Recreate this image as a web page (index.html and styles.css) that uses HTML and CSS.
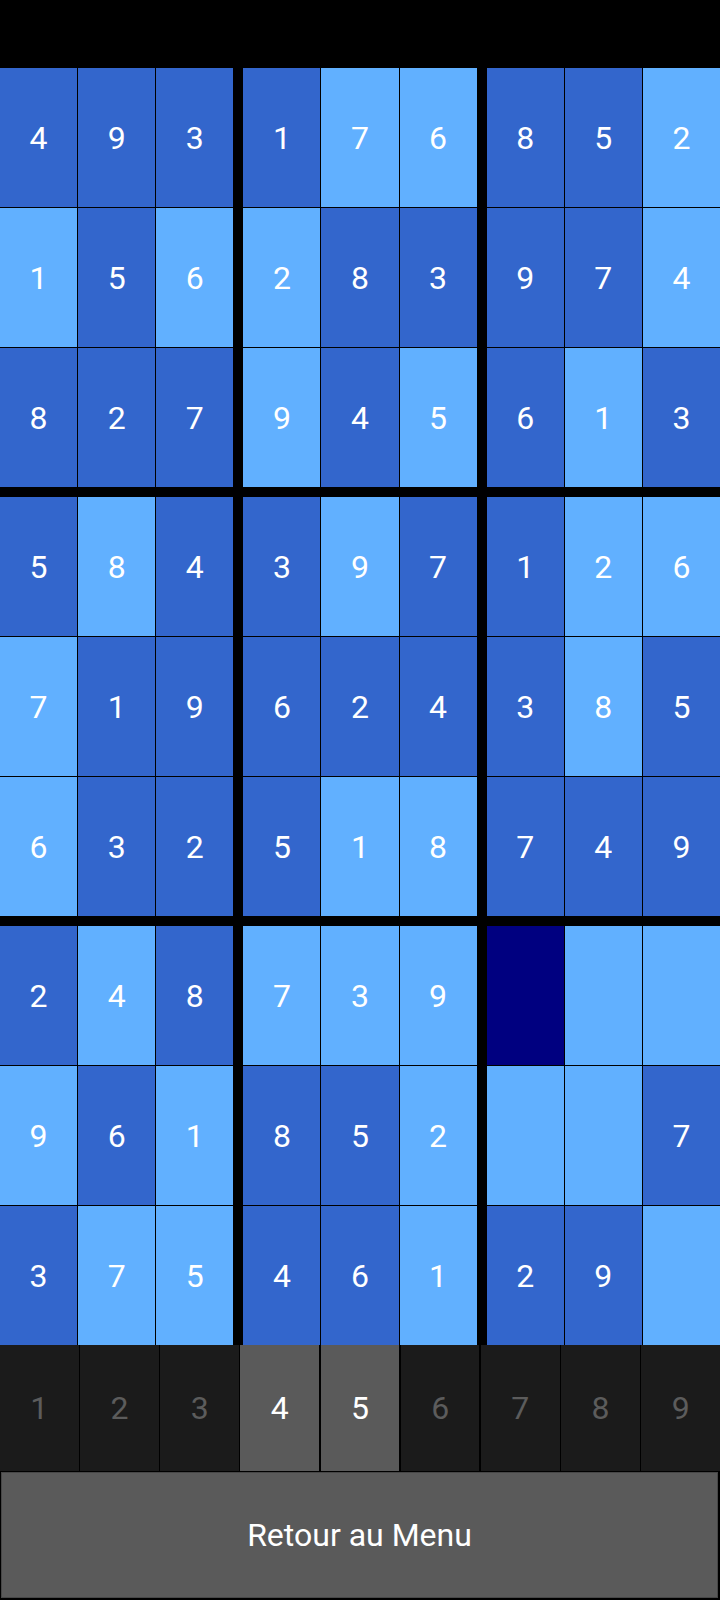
FILE: index.html
```html
<html><head>
<meta charset="UTF-8">
<link rel="stylesheet" href="styles.css">
</head>
<body>
  <div class="topbar"></div>

  <div class="board">
    <div class="block">
      <div class="cell dark">4</div><div class="cell dark">9</div><div class="cell dark">3</div>
      <div class="cell light">1</div><div class="cell dark">5</div><div class="cell light">6</div>
      <div class="cell dark">8</div><div class="cell dark">2</div><div class="cell dark">7</div>
    </div>
    <div class="block">
      <div class="cell dark">1</div><div class="cell light">7</div><div class="cell light">6</div>
      <div class="cell light">2</div><div class="cell dark">8</div><div class="cell dark">3</div>
      <div class="cell light">9</div><div class="cell dark">4</div><div class="cell light">5</div>
    </div>
    <div class="block">
      <div class="cell dark">8</div><div class="cell dark">5</div><div class="cell light">2</div>
      <div class="cell dark">9</div><div class="cell dark">7</div><div class="cell light">4</div>
      <div class="cell dark">6</div><div class="cell light">1</div><div class="cell dark">3</div>
    </div>

    <div class="block">
      <div class="cell dark">5</div><div class="cell light">8</div><div class="cell dark">4</div>
      <div class="cell light">7</div><div class="cell dark">1</div><div class="cell dark">9</div>
      <div class="cell light">6</div><div class="cell dark">3</div><div class="cell dark">2</div>
    </div>
    <div class="block">
      <div class="cell dark">3</div><div class="cell light">9</div><div class="cell dark">7</div>
      <div class="cell dark">6</div><div class="cell dark">2</div><div class="cell dark">4</div>
      <div class="cell dark">5</div><div class="cell light">1</div><div class="cell light">8</div>
    </div>
    <div class="block">
      <div class="cell dark">1</div><div class="cell light">2</div><div class="cell light">6</div>
      <div class="cell dark">3</div><div class="cell light">8</div><div class="cell dark">5</div>
      <div class="cell dark">7</div><div class="cell dark">4</div><div class="cell dark">9</div>
    </div>

    <div class="block">
      <div class="cell dark">2</div><div class="cell light">4</div><div class="cell dark">8</div>
      <div class="cell light">9</div><div class="cell dark">6</div><div class="cell light">1</div>
      <div class="cell dark">3</div><div class="cell light">7</div><div class="cell light">5</div>
    </div>
    <div class="block">
      <div class="cell light">7</div><div class="cell light">3</div><div class="cell light">9</div>
      <div class="cell dark">8</div><div class="cell dark">5</div><div class="cell light">2</div>
      <div class="cell dark">4</div><div class="cell dark">6</div><div class="cell light">1</div>
    </div>
    <div class="block">
      <div class="cell selected"></div><div class="cell light"></div><div class="cell light"></div>
      <div class="cell light"></div><div class="cell light"></div><div class="cell dark">7</div>
      <div class="cell dark">2</div><div class="cell dark">9</div><div class="cell light"></div>
    </div>
  </div>

  <div class="pad">
    <div class="key off">1</div>
    <div class="key off">2</div>
    <div class="key off">3</div>
    <div class="key on">4</div>
    <div class="key on">5</div>
    <div class="key off">6</div>
    <div class="key off">7</div>
    <div class="key off">8</div>
    <div class="key off">9</div>
  </div>

  <div class="menu-btn">Retour au Menu</div>
</body></html>
```

FILE: styles.css
```css
    * {
      box-sizing: border-box;
    }

    body {
      margin: 0;
      width: 720px;
      height: 1600px;
      background-color: #000;
      font-family: Roboto, "Noto Sans", sans-serif;
      color: #fff;
    }

    .topbar {
      height: 68px;
    }

    /* plansza 3x3 bloków */
    .board {
      display: grid;
      grid-template-columns: repeat(3, 1fr);
      grid-template-rows: repeat(3, 419px);
      gap: 10px;
    }

    .block {
      display: grid;
      grid-template-columns: repeat(3, 1fr);
      grid-template-rows: repeat(3, 1fr);
      gap: 1px;
    }

    .cell {
      display: flex;
      align-items: center;
      justify-content: center;
      font-size: 32px;
    }
    .dark {
      background-color: #3366cc;
    }
    .light {
      background-color: #61b0ff;
    }
    .selected {
      background-color: #000080;
    }

    /* klawiatura z cyframi */
    .pad {
      display: grid;
      grid-template-columns: repeat(9, 1fr);
      gap: 1.5px;
      height: 126px;
    }
    .key {
      display: flex;
      align-items: center;
      justify-content: center;
      font-size: 32px;
    }
    .key.off {
      background-color: #1b1b1b;
      color: #5c5c5c;
    }
    .key.on {
      background-color: #5a5a5a;
      color: #fff;
    }

    .menu-btn {
      height: 126px;
      margin: 1px 2px 2px 1px;
      background-color: #5a5a5a;
      border: 1px solid #474747;
      display: flex;
      align-items: center;
      justify-content: center;
      font-size: 32px;
    }
```
